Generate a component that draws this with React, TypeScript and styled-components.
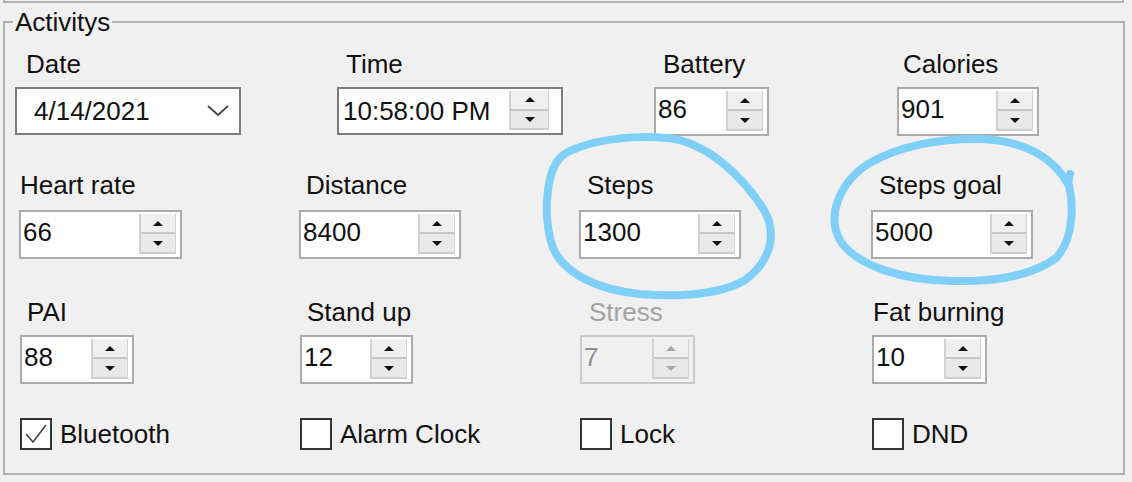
import styled, { createGlobalStyle } from "styled-components";

const GlobalStyle = createGlobalStyle`
  html, body {
    margin: 0;
    padding: 0;
    background: #f0f0f0;
  }
  body {
    font-family: "Liberation Sans", Arial, sans-serif;
    color: #111;
  }
`;

interface NumField {
  label: string;
  value: string;
  width: number;
  indent: number;
  disabled?: boolean;
}

const rowTwo: NumField[] = [
  { label: "Heart rate", value: "66", width: 163, indent: 1 },
  { label: "Distance", value: "8400", width: 162, indent: 7 },
  { label: "Steps", value: "1300", width: 162, indent: 8 },
  { label: "Steps goal", value: "5000", width: 162, indent: 8 },
];

const rowThree: NumField[] = [
  { label: "PAI", value: "88", width: 114, indent: 7 },
  { label: "Stand up", value: "12", width: 113, indent: 7 },
  { label: "Stress", value: "7", width: 115, indent: 9, disabled: true },
  { label: "Fat burning", value: "10", width: 115, indent: 1 },
];

const toggles = [
  { label: "Bluetooth", checked: true },
  { label: "Alarm Clock", checked: false },
  { label: "Lock", checked: false },
  { label: "DND", checked: false },
];

function Spinner({ off, width = 34 }: { off?: boolean; width?: number }) {
  return (
    <Spin $w={width}>
      <SpinBtn>
        <Arrow $up $off={off} />
      </SpinBtn>
      <SpinBtn $low>
        <Arrow $off={off} />
      </SpinBtn>
    </Spin>
  );
}

function NumberBox({ f }: { f: NumField }) {
  return (
    <Field>
      <Label $indent={f.indent} $off={f.disabled}>
        {f.label}
      </Label>
      <Box $w={f.width} $off={f.disabled}>
        <Value $off={f.disabled}>{f.value}</Value>
        <Spinner off={f.disabled} />
      </Box>
    </Field>
  );
}

function App() {
  return (
    <Page>
      <GlobalStyle />
      <UpperFrame />
      <Group>
        <Legend>Activitys</Legend>

        <Row $cols="322px 317px 243px 1fr" $pl={10} $mt={12} $gap={8}>
          <Field>
            <Label $indent={11}>Date</Label>
            <Picker $w={226}>
              <Value $pl={17} $pt={7}>
                4/14/2021
              </Value>
              <svg width="22" height="12" viewBox="0 0 22 12">
                <polyline
                  points="1,1 11,10 21,1"
                  fill="none"
                  stroke="#444"
                  strokeWidth="1.8"
                />
              </svg>
            </Picker>
          </Field>
          <Field>
            <Label $indent={9}>Time</Label>
            <Picker $w={226}>
              <Value $pl={4} $pt={7}>
                10:58:00 PM
              </Value>
              <Spinner width={37} />
            </Picker>
          </Field>
          <NumberBox f={{ label: "Battery", value: "86", width: 115, indent: 9 }} />
          <NumberBox f={{ label: "Calories", value: "901", width: 142, indent: 6 }} />
        </Row>

        <Row $cols="280px 280px 292px 1fr" $pl={14} $mt={34} $gap={10}>
          {rowTwo.map((f) => (
            <NumberBox key={f.label} f={f} />
          ))}
        </Row>

        <Row $cols="280px 280px 292px 1fr" $pl={15} $mt={38} $gap={8}>
          {rowThree.map((f) => (
            <NumberBox key={f.label} f={f} />
          ))}
        </Row>

        <Row $cols="280px 280px 292px 1fr" $pl={15} $mt={34} $gap={0}>
          {toggles.map((t) => (
            <Check key={t.label}>
              <CheckSquare>
                {t.checked && (
                  <svg width="28" height="28" viewBox="0 0 28 28">
                    <polyline
                      points="4,14 11,22 24,5"
                      fill="none"
                      stroke="#444"
                      strokeWidth="1.6"
                    />
                  </svg>
                )}
              </CheckSquare>
              {t.label}
            </Check>
          ))}
        </Row>
      </Group>

      <Marks viewBox="0 0 1132 482" width="1132" height="482">
        <path d="M 572 150 C 600 138, 640 135, 668 138 C 710 143, 745 180, 764 210 C 778 235, 770 262, 745 280 C 720 295, 680 297, 640 294 C 600 290, 565 275, 553 248 C 543 220, 546 180, 556 163 C 561 156, 566 152, 572 150 Z" />
        <path d="M 1067 178 C 1074 200, 1075 238, 1056 258 C 1032 276, 992 282, 952 281 C 902 280, 858 266, 841 242 C 826 218, 838 184, 868 164 C 898 146, 940 138, 982 139 C 1022 141, 1052 156, 1068 184 L 1070 174" />
      </Marks>
    </Page>
  );
}

const Page = styled.div`
  position: relative;
  width: 1132px;
  height: 482px;
  overflow: hidden;
  background: #f0f0f0;
`;

const UpperFrame = styled.div`
  box-sizing: border-box;
  margin-left: 3px;
  width: 1121px;
  height: 3px;
  border: 2px solid #b2b2b2;
  border-top: none;
`;

const Group = styled.fieldset`
  box-sizing: border-box;
  margin: 4px 0 0 3px;
  width: 1122px;
  min-width: 0;
  padding: 0 0 23px 0;
  border: 2px solid #b0b0b0;
`;

const Legend = styled.legend`
  margin-left: 8px;
  padding: 0 2px;
  font-size: 26px;
  line-height: 30px;
  color: #111;
`;

const Row = styled.div<{ $cols: string; $pl: number; $mt: number; $gap: number }>`
  display: grid;
  grid-template-columns: ${(p) => p.$cols};
  padding-left: ${(p) => p.$pl}px;
  margin-top: ${(p) => p.$mt}px;
  --label-gap: ${(p) => p.$gap}px;
`;

const Field = styled.div`
  display: flex;
  flex-direction: column;
  align-items: flex-start;
`;

const Label = styled.div<{ $indent: number; $off?: boolean }>`
  padding-left: ${(p) => p.$indent}px;
  margin-bottom: var(--label-gap);
  font-size: 26px;
  line-height: 30px;
  color: ${(p) => (p.$off ? "#a3a3a3" : "#111")};
  white-space: nowrap;
`;

const Box = styled.div<{ $w: number; $off?: boolean }>`
  box-sizing: border-box;
  display: flex;
  width: ${(p) => p.$w}px;
  height: 49px;
  border: 2px solid ${(p) => (p.$off ? "#c9c9c9" : "#ababab")};
  background: ${(p) => (p.$off ? "#f0f0f0" : "#fff")};
`;

const Picker = styled.div<{ $w: number }>`
  box-sizing: border-box;
  display: flex;
  align-items: center;
  width: ${(p) => p.$w}px;
  height: 48px;
  padding-right: 8px;
  border: 2px solid #7d7d7d;
  background: #fff;

  & > svg {
    margin-right: 2px;
  }
`;

const Value = styled.div<{ $pl?: number; $pt?: number; $off?: boolean }>`
  flex: 1;
  align-self: flex-start;
  padding-left: ${(p) => p.$pl ?? 2}px;
  padding-top: ${(p) => p.$pt ?? 5}px;
  font-size: 26px;
  line-height: 30px;
  color: ${(p) => (p.$off ? "#8f8f8f" : "#111")};
  white-space: nowrap;
`;

const Spin = styled.div<{ $w: number }>`
  display: flex;
  flex-direction: column;
  align-self: stretch;
  width: ${(p) => p.$w}px;
  margin: 2px 4px 3px 0;
  border-left: 2px solid #d2d2d2;
  border-right: 1px solid #d2d2d2;
`;

const SpinBtn = styled.div<{ $low?: boolean }>`
  flex: 1;
  display: flex;
  align-items: center;
  justify-content: center;
  background: ${(p) => (p.$low ? "#e9e9e9" : "#efefef")};
  border-top: ${(p) => (p.$low ? "2px solid #c6c6c6" : "none")};
  border-bottom: ${(p) => (p.$low ? "2px solid #cdcdcd" : "none")};
`;

const Arrow = styled.span<{ $up?: boolean; $off?: boolean }>`
  width: 0;
  height: 0;
  border-left: 5px solid transparent;
  border-right: 5px solid transparent;
  ${(p) =>
    p.$up
      ? `border-bottom: 5px solid ${p.$off ? "#a6a6a6" : "#111"};`
      : `border-top: 5px solid ${p.$off ? "#a6a6a6" : "#111"};`}
`;

const Check = styled.label`
  display: flex;
  align-items: center;
  gap: 8px;
  font-size: 26px;
  line-height: 30px;
  color: #111;
  white-space: nowrap;
`;

const CheckSquare = styled.span`
  box-sizing: border-box;
  display: flex;
  align-items: center;
  justify-content: center;
  width: 32px;
  height: 32px;
  border: 2px solid #333;
  background: #fff;
`;

const Marks = styled.svg`
  position: absolute;
  top: 0;
  left: 0;
  pointer-events: none;

  path {
    fill: none;
    stroke: #80cff7;
    stroke-width: 8;
    stroke-linecap: round;
    stroke-linejoin: round;
  }
`;

export default App;
